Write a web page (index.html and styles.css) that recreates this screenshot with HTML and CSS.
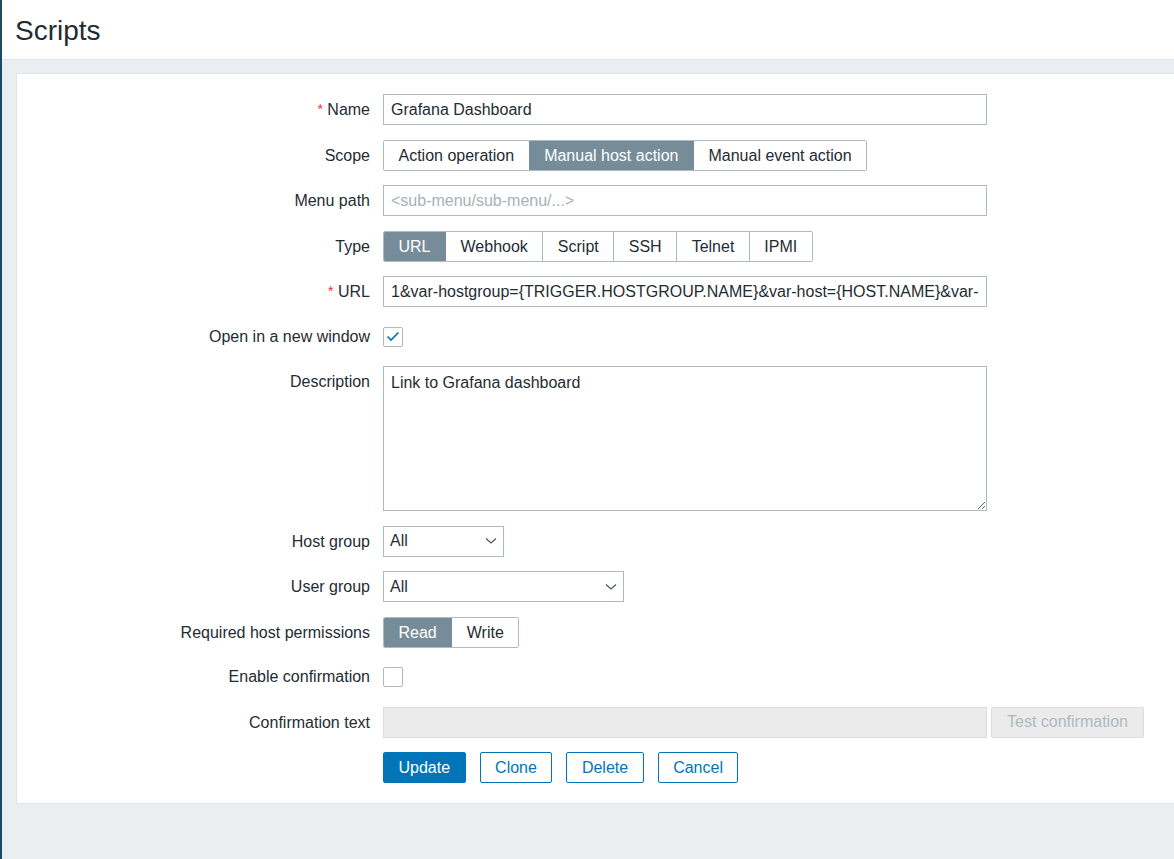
FILE: index.html
```html
<!DOCTYPE html>
<html>
<head>
    <meta charset="utf-8">
    <link rel="stylesheet" href="styles.css">
</head>
<body>
<div class="page">
    <header class="page-header">
        <h1>Scripts</h1>
    </header>
    <main class="content">
        <div class="form-box">
            <form class="form-grid">
                <label class="form-label"><span class="req">*</span> Name</label>
                <div class="form-field"><input class="text-input wide" type="text" value="Grafana Dashboard"></div>

                <label class="form-label">Scope</label>
                <div class="form-field">
                    <div class="segmented">
                        <span class="seg">Action operation</span>
                        <span class="seg active">Manual host action</span>
                        <span class="seg">Manual event action</span>
                    </div>
                </div>

                <label class="form-label">Menu path</label>
                <div class="form-field"><input class="text-input wide" type="text" placeholder="<sub-menu/sub-menu/...>"></div>

                <label class="form-label">Type</label>
                <div class="form-field">
                    <div class="segmented">
                        <span class="seg active">URL</span>
                        <span class="seg">Webhook</span>
                        <span class="seg">Script</span>
                        <span class="seg">SSH</span>
                        <span class="seg">Telnet</span>
                        <span class="seg">IPMI</span>
                    </div>
                </div>

                <label class="form-label"><span class="req">*</span> URL</label>
                <div class="form-field"><input class="text-input wide" type="text" value="1&amp;var-hostgroup={TRIGGER.HOSTGROUP.NAME}&amp;var-host={HOST.NAME}&amp;var-"></div>

                <label class="form-label short">Open in a new window</label>
                <div class="form-field short">
                    <span class="checkbox">
                        <svg width="14" height="11" viewBox="0 0 14 11"><path d="M1.5 5.5 L5 9 L12.5 1.5" fill="none" stroke="#0275b8" stroke-width="1.7"/></svg>
                    </span>
                </div>

                <label class="form-label top">Description</label>
                <div class="form-field"><textarea class="text-area wide">Link to Grafana dashboard</textarea></div>

                <label class="form-label">Host group</label>
                <div class="form-field">
                    <div class="select small">
                        <span>All</span>
                        <svg width="12" height="8" viewBox="0 0 12 8"><path d="M1 1.5 L6 6 L11 1.5" fill="none" stroke="#4a5a63" stroke-width="1.3"/></svg>
                    </div>
                </div>

                <label class="form-label">User group</label>
                <div class="form-field">
                    <div class="select medium">
                        <span>All</span>
                        <svg width="12" height="8" viewBox="0 0 12 8"><path d="M1 1.5 L6 6 L11 1.5" fill="none" stroke="#4a5a63" stroke-width="1.3"/></svg>
                    </div>
                </div>

                <label class="form-label">Required host permissions</label>
                <div class="form-field">
                    <div class="segmented">
                        <span class="seg active">Read</span>
                        <span class="seg">Write</span>
                    </div>
                </div>

                <label class="form-label short">Enable confirmation</label>
                <div class="form-field short"><span class="checkbox"></span></div>

                <label class="form-label">Confirmation text</label>
                <div class="form-field inline">
                    <input class="text-input wide" type="text" disabled>
                    <button type="button" class="btn-disabled">Test confirmation</button>
                </div>

                <div></div>
                <div class="form-field buttons">
                    <button type="button" class="btn primary">Update</button>
                    <button type="button" class="btn">Clone</button>
                    <button type="button" class="btn">Delete</button>
                    <button type="button" class="btn">Cancel</button>
                </div>
            </form>
        </div>
    </main>
</div>
</body>
</html>
```

FILE: styles.css
```css
html, body {
    margin: 0;
    height: 100%;
}

body {
    background-color: #ebeef0;
    color: #1f2c33;
    font-family: "Liberation Sans", Arial, sans-serif;
    font-size: 16px;
    overflow: hidden;
}

.page {
    min-height: 100%;
    border-left: 2px solid #1c4a66;
}

.page-header {
    background-color: #fff;
    height: 59px;
    border-bottom: 1px solid #dfe4e7;
    display: flex;
    align-items: center;
}

.page-header h1 {
    margin: 3px 0 0 13px;
    font-size: 28px;
    font-weight: normal;
    color: #1f2c33;
}

.content {
    padding: 13px 0 0 14px;
}

.form-box {
    background-color: #fff;
    border: 1px solid #dfe4e7;
    margin-right: -20px;
    padding: 20px 0 20px;
}

.form-grid {
    display: grid;
    grid-template-columns: 353px 1fr;
    column-gap: 13px;
    row-gap: 14.5px;
}

.form-label {
    height: 31px;
    line-height: 31px;
    text-align: right;
    white-space: nowrap;
}

.form-label.short {
    height: 30px;
    line-height: 30px;
}

.form-label.top {
    align-self: start;
}

.req {
    color: #e33734;
    font-size: 14px;
    vertical-align: 1px;
}

.form-field {
    display: flex;
    align-items: center;
    min-height: 31px;
}

.form-field.short {
    min-height: 30px;
}

.form-field.inline {
    gap: 4px;
}

.form-field.buttons {
    gap: 14px;
}

.text-input, .text-area {
    box-sizing: border-box;
    font-family: "Liberation Sans", Arial, sans-serif;
    font-size: 16px;
    color: #1f2c33;
    border: 1px solid #acbbc2;
    border-radius: 0;
    background-color: #fff;
    outline: none;
}

.text-input {
    height: 31px;
    padding: 0 7px;
}

.text-input::placeholder {
    color: #a5b1b8;
}

.text-input:disabled {
    background-color: #ebebeb;
    border-color: #dcdcdc;
}

.wide {
    width: 604px;
}

.text-area {
    height: 145px;
    padding: 6px 7px;
    line-height: 20px;
    resize: both;
}

.segmented {
    display: inline-flex;
    border: 1px solid #acbbc2;
    border-radius: 2px;
    overflow: hidden;
}

.seg {
    height: 29px;
    line-height: 29px;
    padding: 0 14.5px;
    border-left: 1px solid #acbbc2;
    background-color: #fff;
    white-space: nowrap;
}

.seg:first-child {
    border-left: none;
}

.seg.active {
    background-color: #768d99;
    border-left-color: #768d99;
    color: #fff;
}

.seg.active + .seg {
    border-left-color: #768d99;
}

.checkbox {
    box-sizing: border-box;
    width: 20px;
    height: 20px;
    border: 1px solid #acbbc2;
    border-radius: 2px;
    display: inline-flex;
    align-items: center;
    justify-content: center;
}

.select {
    box-sizing: border-box;
    height: 31px;
    border: 1px solid #acbbc2;
    display: flex;
    align-items: center;
    justify-content: space-between;
    padding: 0 6px 0 6px;
}

.select.small {
    width: 121px;
}

.select.medium {
    width: 241px;
}

.btn, .btn-disabled {
    box-sizing: border-box;
    height: 31px;
    padding: 0 14.5px;
    font-family: "Liberation Sans", Arial, sans-serif;
    font-size: 16px;
    border-radius: 2px;
    cursor: pointer;
}

.btn {
    background-color: #fff;
    color: #0275b8;
    border: 1px solid #0275b8;
}

.btn.primary {
    background-color: #0275b8;
    color: #fff;
}

.btn-disabled {
    width: 153px;
    background-color: #ebebeb;
    color: #acbbc2;
    border: 1px solid #dcdcdc;
}
```
